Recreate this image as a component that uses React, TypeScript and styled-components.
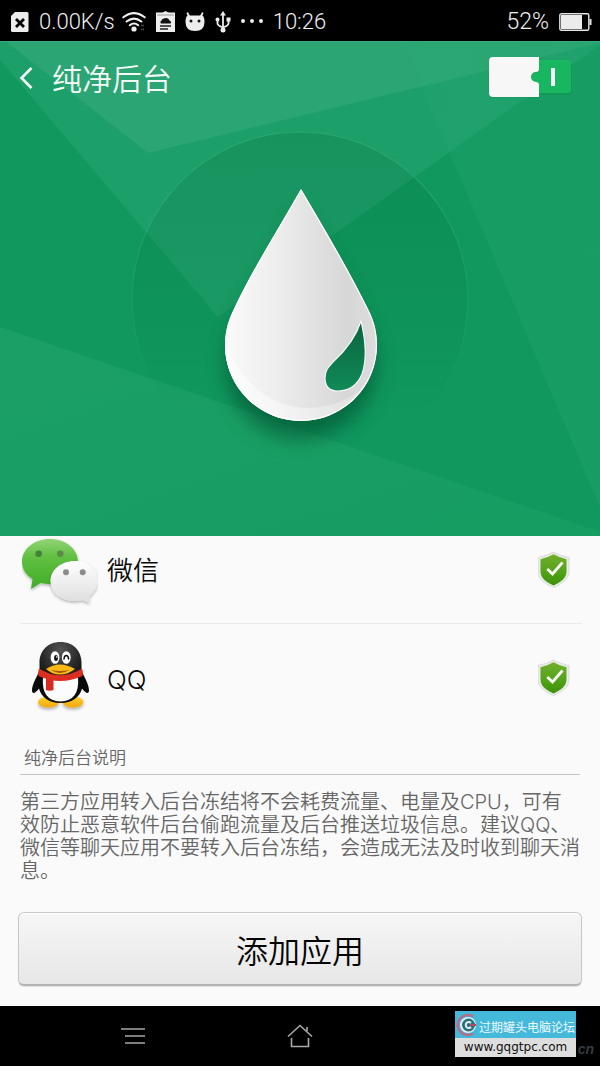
import React, { useState } from 'react';
import styled, { createGlobalStyle } from 'styled-components';

const GlobalStyle = createGlobalStyle`
  *, *::before, *::after { box-sizing: border-box; }
  html { background: #000; }
  body { margin: 0; background: #fafafa; font-family: Inter, "Noto Sans CJK SC", sans-serif; }
  button { font: inherit; color: inherit; background: none; border: 0; padding: 0; cursor: pointer; }
  svg { display: block; flex: none; }
`;

const Screen = styled.div`
  min-height: 100vh;
  display: flex;
  flex-direction: column;
`;

const StatusBar = styled.header`
  display: flex;
  align-items: center;
  justify-content: space-between;
  height: 41px;
  padding: 2px 8px 0 11px;
  background: #000;
  color: #f0f0f0;
  font: 300 22px/26px Roboto, sans-serif;
`;

const StatusGroup = styled.div`
  display: flex;
  align-items: center;
  gap: 10px;
`;

const NetworkGroup = styled(StatusGroup)`
  gap: 7px;
`;

const Percent = styled.span`
  font-size: 23px;
`;

const Hero = styled.section`
  position: relative;
  z-index: 1;
  display: grid;
  grid-template: 495px / minmax(0, 1fr);
  background: #10985f;
  & > * { grid-area: 1 / 1; }
`;

const Facets = styled.svg`
  width: 100%;
  height: 100%;
`;

const Emblem = styled.svg`
  justify-self: center;
  align-self: start;
`;

const TitleBar = styled.div`
  position: relative;
  align-self: start;
  display: flex;
  align-items: center;
  height: 74px;
  padding: 0 28px 0 18px;
  color: #f4fbf7;
`;

const BackButton = styled.button`
  display: flex;
  padding-right: 16px;
`;

const Title = styled.h1`
  margin: 0;
  padding-top: 2px;
  flex: 1;
  font-size: 30px;
  font-weight: 350;
  line-height: 40px;
`;

const Switch = styled.label`
  display: block;
  cursor: pointer;
  & input { position: absolute; opacity: 0; margin: 0; }
`;

const AppList = styled.ul`
  list-style: none;
  margin: -20px 18px 0 20px;
  padding: 0;
`;

const AppRow = styled.li`
  display: flex;
  align-items: center;
  height: 108px;
  padding: 0 12px 0 2px;
  &:not(:last-child) { border-bottom: 1px solid #ebebeb; }
`;

const AppName = styled.span`
  flex: 1;
  padding: 3px 0 0 9px;
  color: #0a0a0a;
  font-size: 26px;
  font-weight: 350;
  line-height: 36px;
`;

const Notes = styled.section`
  padding: 14px 20px 0;
  color: #666;
`;

const NotesHeading = styled.h2`
  margin: 0;
  padding: 0 4px 4px;
  border-bottom: 1px solid #c4c4c4;
  font-size: 17px;
  font-weight: 350;
  line-height: 24px;
`;

const NotesText = styled.p`
  margin: 16px 0 0;
  font-size: 20px;
  font-weight: 350;
  line-height: 23px;
`;

const AddButton = styled.button`
  height: 74px;
  margin: 29px 18px 20px;
  border: 1px solid #c9c9c9;
  border-bottom: 2px solid #b4b4b4;
  border-radius: 6px;
  background: linear-gradient(#f6f6f6, #e7e7e7);
  box-shadow: 0 1px 1px #dedede, inset 0 1px 0 #fff;
  color: #050505;
  font-size: 32px;
  font-weight: 350;
`;

const NavBar = styled.nav`
  position: relative;
  display: grid;
  grid-template-columns: 1fr 1fr 1fr;
  align-items: center;
  height: 60px;
  margin-top: auto;
  padding: 0 50px;
  background: #000;
`;

const NavButton = styled.button`
  display: flex;
  justify-content: center;
`;

const Watermark = styled.a`
  position: absolute;
  right: 24px;
  top: 5px;
  width: 121px;
  background: #dedede;
  color: #111;
  font: 12px/19px "DejaVu Sans", sans-serif;
  text-align: center;
  text-decoration: none;
`;

const WatermarkName = styled.span`
  display: flex;
  align-items: center;
  height: 27px;
  padding: 4px 0 0 1px;
  gap: 1px;
  background: #45b9da;
  color: #eefaff;
  font: 12px/18px "Noto Sans CJK SC", sans-serif;
  white-space: nowrap;
  & svg { margin-top: -4px; }
`;

const WatermarkSuffix = styled.span`
  position: absolute;
  right: 6px;
  top: 33px;
  color: #363b3e;
  font: italic bold 14px/20px "Liberation Sans", sans-serif;
`;

const SimIcon = () => (
  <svg width="18" height="20" viewBox="0 0 18 20" aria-hidden="true">
    <path d="M4 0H16Q17.500 0 17.500 1.500V18.500Q17.500 20 16 20H1.500Q0 20 0 18.500V4Z" fill="#ededed" />
    <path d="M5 7L13 15M13 7L5 15" stroke="#050505" strokeWidth="2.800" />
  </svg>
);

const WifiIcon = () => (
  <svg width="24" height="20" viewBox="0 0 24 20" aria-hidden="true">
    <g fill="none" stroke="#ededed" strokeWidth="2.100" strokeLinecap="round">
      <path d="M1.300 5.300Q12-3.200 22.700 5.300" />
      <path d="M4.600 9.500Q12 3.600 19.400 9.500" />
      <path d="M7.800 13.200Q12 9.800 16.200 13.200" />
    </g>
    <circle cx="12" cy="17" r="2.600" fill="#ededed" />
    <path d="M19 13.500h3M19 17.500h3" stroke="#444" strokeWidth="1.400" />
  </svg>
);

const ClipboardIcon = () => (
  <svg width="19" height="21" viewBox="0 0 19 21" aria-hidden="true">
    <path d="M0 1.500H19V21H0Z" fill="#ededed" />
    <path d="M6 2L9.500 0L13 2V4H6Z" fill="#ededed" />
    <path d="M1 4H18" stroke="#999" />
    <path d="M5 12.500Q3.500 11.300 5.500 9.500Q6 7.500 8.500 7.300Q12.500 6 13.500 9.500Q16 11 14.500 12.500Z" fill="#111" />
    <path d="M4 15H15M4 18H12" stroke="#222" strokeWidth="1.300" />
  </svg>
);

const RobotIcon = () => (
  <svg width="20" height="20" viewBox="0 0 20 20" aria-hidden="true">
    <path d="M2.500 1.300L4.500 5M17.500 1.300L15.500 5" stroke="#ededed" strokeWidth="1.800" strokeLinecap="round" />
    <path d="M2.500 3.500H17.500Q19.500 5 19.500 10Q19.500 19 10 19Q.5 19 .5 10Q.5 5 2.500 3.500Z" fill="#ededed" />
    <circle cx="6" cy="9" r="1.500" fill="#111" />
    <circle cx="14" cy="9" r="1.500" fill="#111" />
  </svg>
);

const UsbIcon = () => (
  <svg width="16" height="22" viewBox="0 0 16 22" aria-hidden="true">
    <path d="M8 3V19M2.500 8.500V12.500Q2.500 14.500 8 16.500Q13.500 14.500 13.500 12.500V8.500" fill="none" stroke="#ededed" strokeWidth="1.800" />
    <path d="M8 0L11 4.500H5Z" fill="#ededed" />
    <circle cx="8" cy="19" r="2.500" fill="#ededed" />
    <circle cx="2.500" cy="8.500" r="2" fill="#ededed" />
    <path d="M11.500 6.500h4v4h-4z" fill="#ededed" />
  </svg>
);

const MoreIcon = () => (
  <svg width="22" height="6" viewBox="0 0 22 6" fill="#ededed" aria-hidden="true">
    <circle cx="2" cy="2" r="2" />
    <circle cx="11" cy="2" r="2" />
    <circle cx="20" cy="2" r="2" />
  </svg>
);

const BatteryIcon = () => (
  <svg width="33" height="18" viewBox="0 0 33 18" aria-hidden="true">
    <rect x=".8" y=".8" width="29" height="16.400" rx="1.500" fill="none" stroke="#e4e4e4" strokeWidth="1.400" />
    <path d="M2 2H23V16H2Z" fill="#ececec" />
    <path d="M30.500 6H32.500V12H30.500Z" fill="#e4e4e4" />
  </svg>
);

const HeroFacets = () => (
  <Facets viewBox="0 41 600 495" preserveAspectRatio="none" aria-hidden="true">
    <defs>
      <linearGradient id="rightFacet" x1="0" y1="0" x2="1" y2="0.300">
        <stop offset="0" stopColor="#2fae78" stopOpacity=".15" />
        <stop offset="1" stopColor="#25a56d" stopOpacity=".36" />
      </linearGradient>
      <linearGradient id="lowFacet" x1="0" y1="0" x2="1" y2="1">
        <stop offset="0" stopColor="#1b9f67" />
        <stop offset="1" stopColor="#169d62" />
      </linearGradient>
    </defs>
    <path d="M0 41H600V45L218 317L0 60Z" fill="#1d9f6a" />
    <path d="M5 41H600V43L148 153Z" fill="#2aa573" />
    <path d="M402 41H600V507Z" fill="url(#rightFacet)" />
    <path d="M0 327L600 532V536H0Z" fill="url(#lowFacet)" />
    <path d="M0 41H600V42H0Z" fill="#3aa97b" />
  </Facets>
);

const DropEmblem = () => (
  <Emblem width="360" height="420" viewBox="120 41 360 420" aria-hidden="true">
    <defs>
      <linearGradient id="disc" x1="0" y1="0" x2="0" y2="1">
        <stop offset="0" stopColor="#00642f" stopOpacity=".2" />
        <stop offset=".5" stopColor="#007038" stopOpacity=".13" />
        <stop offset=".85" stopColor="#007038" stopOpacity="0" />
      </linearGradient>
      <linearGradient id="discRim" x1="0" y1="0" x2="0" y2="1">
        <stop offset="0" stopColor="#3ab27c" stopOpacity=".5" />
        <stop offset=".6" stopColor="#3ab27c" stopOpacity=".2" />
        <stop offset=".75" stopColor="#3ab27c" stopOpacity="0" />
      </linearGradient>
      <linearGradient id="dropFill" x1="0" y1="0" x2="1" y2="0">
        <stop offset="0" stopColor="#fafafa" />
        <stop offset=".35" stopColor="#ededed" />
        <stop offset=".8" stopColor="#d7d7d7" />
        <stop offset="1" stopColor="#dcdcdc" />
      </linearGradient>
      <linearGradient id="dropGlow" x1="0" y1="0" x2="1" y2="0">
        <stop offset="0" stopColor="#fff" stopOpacity=".6" />
        <stop offset="1" stopColor="#fff" stopOpacity=".2" />
      </linearGradient>
      <linearGradient id="leaf" x1="0" y1="0" x2="0" y2="1">
        <stop offset="0" stopColor="#0a6340" />
        <stop offset="1" stopColor="#108b57" />
      </linearGradient>
      <filter id="dropShadow" x="-30%" y="-20%" width="160%" height="150%">
        <feGaussianBlur stdDeviation="10" />
      </filter>
      <clipPath id="dropClip">
        <path d="M301 189C325 230 349 270 369 311A76 76 0 1 1 233 311C252 270 278 230 301 189Z" />
      </clipPath>
    </defs>
    <circle cx="300" cy="300" r="168" fill="url(#disc)" stroke="url(#discRim)" strokeWidth="1.200" />
    <path d="M301 205C325 245 349 284 367 319A75 75 0 1 1 235 319C252 284 278 245 301 205Z" transform="translate(0 9)" fill="#004a29" opacity=".6" filter="url(#dropShadow)" />
    <path d="M301 189C325 230 349 270 369 311A76 76 0 1 1 233 311C252 270 278 230 301 189Z" fill="url(#dropFill)" />
    <g clipPath="url(#dropClip)">
      <path d="M220 330Q248 408 310 408Q360 406 385 360V430H220Z" fill="url(#dropGlow)" />
      <path d="M301 189C325 230 349 270 369 311A76 76 0 1 1 233 311C252 270 278 230 301 189Z" fill="none" stroke="#fff" strokeWidth="2.200" />
    </g>
    <path d="M361 321C366 342 367 360 362 374C357 386 348 391 338 391C329 391 325 386 325 378C325 371 328 367 333 362C345 351 356 337 361 321Z" fill="url(#leaf)" stroke="#f6f6f6" strokeWidth="1.200" />
  </Emblem>
);

const WeChatIcon = () => (
  <svg width="76" height="76" viewBox="0 0 76 76" aria-hidden="true">
    <defs>
      <linearGradient id="wxGreen" x1="0" y1="0" x2="0" y2="1">
        <stop offset="0" stopColor="#92d477" />
        <stop offset=".35" stopColor="#62c043" />
        <stop offset="1" stopColor="#3fad27" />
      </linearGradient>
      <linearGradient id="wxWhite" x1="0" y1="0" x2="0" y2="1">
        <stop offset="0" stopColor="#fff" />
        <stop offset="1" stopColor="#dedede" />
      </linearGradient>
      <filter id="wxShadow" x="-20%" y="-20%" width="140%" height="150%">
        <feDropShadow dx="0" dy="1.500" stdDeviation="1.500" floodColor="#000" floodOpacity=".3" />
      </filter>
    </defs>
    <path filter="url(#wxShadow)" d="M28 7C44 7 56 17 56 30S44 52 28 52Q23 52 18.500 51L9 57L10.500 47C4 43 0 37 0 30C0 17 12 7 28 7Z" fill="url(#wxGreen)" />
    <circle cx="16.700" cy="21.700" r="3.300" fill="#42833a" />
    <circle cx="38.300" cy="21.700" r="3.300" fill="#5a8c48" />
    <path filter="url(#wxShadow)" d="M52.500 29C65.500 29 75.500 37.500 75.500 48.500C75.500 55 72 60.500 67 64.500L67.500 71L60 68Q56 69 52.500 69C39 69 28.500 60 28.500 49S39 29 52.500 29Z" fill="url(#wxWhite)" />
    <circle cx="44" cy="40.300" r="3" fill="#8c8c8c" />
    <circle cx="60.700" cy="40.300" r="3" fill="#8c8c8c" />
  </svg>
);

const QQIcon = () => (
  <svg width="76" height="76" viewBox="0 0 76 76" aria-hidden="true">
    <defs>
      <radialGradient id="qqHead" cx=".5" cy=".15" r=".55">
        <stop offset="0" stopColor="#555" />
        <stop offset="1" stopColor="#0a0a0a" />
      </radialGradient>
      <linearGradient id="qqFoot" x1="0" y1="0" x2="0" y2="1">
        <stop offset="0" stopColor="#ffd32e" />
        <stop offset="1" stopColor="#f3a60c" />
      </linearGradient>
      <filter id="qqShadow" x="-20%" y="-20%" width="140%" height="180%">
        <feDropShadow dx="0" dy="2" stdDeviation="1.500" floodColor="#000" floodOpacity=".3" />
      </filter>
    </defs>
    <g filter="url(#qqShadow)" fill="url(#qqFoot)">
      <ellipse cx="26.500" cy="62" rx="10.500" ry="5.500" />
      <ellipse cx="51" cy="62" rx="10.500" ry="5.500" />
    </g>
    <path d="M38.500 2C51 2 59.500 10.500 59.500 22.500V31C63 38 67 45 67 50.500C67 54 64 54 60 48.500C58 57 50 63 38.500 63S19 57 17 48.500C13 54 10 54 10 50.500C10 45 14 38 17.500 31V22.500C17.500 10.500 26 2 38.500 2Z" fill="url(#qqHead)" />
    <path d="M21 37Q38 43 56 37Q58 61 38.500 61.500Q19 61 21 37Z" fill="#fcfcfc" />
    <path d="M17 28.500Q38 42 60 28.500Q61.500 32 60.500 36Q38 46 16.500 36Q15.500 32 17 28.500Z" fill="#dd2f21" />
    <path d="M24 38L31.500 40V50Q27.500 51.500 24 50Z" fill="#d82a1e" />
    <ellipse cx="33" cy="17.500" rx="4.400" ry="6.300" fill="#fff" />
    <ellipse cx="44.300" cy="17.500" rx="4.400" ry="6.300" fill="#fff" />
    <ellipse cx="34" cy="18" rx="1.900" ry="3" fill="#111" />
    <circle cx="34.700" cy="17" r=".8" fill="#fff" />
    <path d="M42 19Q42.300 15.500 44.300 15.500T46.600 19" fill="none" stroke="#111" strokeWidth="1.500" strokeLinecap="round" />
    <path d="M24 29Q31 24.500 38 24.500T53 29Q46 34.500 38 34.500T24 29Z" fill="#fcb814" />
    <path d="M29 30Q38 32 47 30Q43 33 38 33T29 30Z" fill="#a45a08" />
  </svg>
);

const ShieldIcon = () => (
  <svg width="32" height="38" viewBox="0 0 32 38" aria-hidden="true">
    <defs>
      <linearGradient id="shield" x1="0" y1="0" x2="0" y2="1">
        <stop offset="0" stopColor="#71ae2c" />
        <stop offset=".5" stopColor="#57a41c" />
        <stop offset="1" stopColor="#3b9208" />
      </linearGradient>
    </defs>
    <path d="M15.500 1Q22.500 5 31 6.500V20.500C31 29 23 33 15.500 36.500C8 33 0 29 0 20.500V6.500Q8.500 5 15.500 1Z" fill="#e9ece4" stroke="#d4d5d8" strokeWidth=".8" />
    <path d="M15.500 3.300Q22 7 28.500 8.200V20.500C28.500 27.500 22 31.500 15.500 34.500C9 31.500 2.500 27.500 2.500 20.500V8.200Q9 7 15.500 3.300Z" fill="url(#shield)" />
    <path d="M9.300 18L14.500 23L24.500 11.500" fill="none" stroke="#fbfdf7" strokeWidth="2.800" />
  </svg>
);

const ToggleArt = ({ on }: { on: boolean }) => (
  <svg width="83" height="42" viewBox="0 0 83 42" aria-hidden="true">
    <path d="M48 5H80Q83 5 83 8V35Q83 38 80 38H48Z" fill="#129453" opacity=".6" />
    <path d="M40 3H79Q82 3 82 6V33Q82 36 79 36H40Z" fill="#19b662" />
    <path d="M4 1H50V13.500Q50 16 47 16A5 5 0 0 0 47 26Q50 26 50 28.500V41H4Q0 41 0 37V5Q0 1 4 1Z" fill="#14955a" opacity=".6" />
    <path d="M4 0H50V12Q50 15 47 15A5 5 0 0 0 47 25Q50 25 50 28V40H4Q0 40 0 36V4Q0 0 4 0Z" fill="#f7f7f7" />
    {on && <path d="M62 11H66V29H62Z" fill="#f4fff8" />}
  </svg>
);

const apps = [
  { name: '微信', Icon: WeChatIcon },
  { name: 'QQ', Icon: QQIcon },
];

export default function App() {
  const [enabled, setEnabled] = useState(true);

  return (
    <Screen>
      <GlobalStyle />
      <StatusBar>
        <StatusGroup>
          <SimIcon />
          <NetworkGroup>
            <span>0.00K/s</span>
            <WifiIcon />
          </NetworkGroup>
          <ClipboardIcon />
          <RobotIcon />
          <UsbIcon />
          <MoreIcon />
          <time>10:26</time>
        </StatusGroup>
        <StatusGroup>
          <Percent>52%</Percent>
          <BatteryIcon />
        </StatusGroup>
      </StatusBar>

      <Hero>
        <HeroFacets />
        <DropEmblem />
        <TitleBar>
          <BackButton type="button" aria-label="返回">
            <svg width="18" height="24" viewBox="0 0 18 24" fill="none" stroke="#f4fbf7" strokeWidth="2.600" aria-hidden="true">
              <path d="M13.500 2L3.500 12L13.500 22" />
            </svg>
          </BackButton>
          <Title>纯净后台</Title>
          <Switch>
            <input type="checkbox" role="switch" aria-label="纯净后台" checked={enabled} onChange={(e) => setEnabled(e.target.checked)} />
            <ToggleArt on={enabled} />
          </Switch>
        </TitleBar>
      </Hero>

      <AppList>
        {apps.map(({ name, Icon }) => (
          <AppRow key={name}>
            <Icon />
            <AppName>{name}</AppName>
            <button type="button" aria-label={name}>
              <ShieldIcon />
            </button>
          </AppRow>
        ))}
      </AppList>

      <Notes>
        <NotesHeading>纯净后台说明</NotesHeading>
        <NotesText>
          第三方应用转入后台冻结将不会耗费流量、电量及CPU，可有效防止恶意软件后台偷跑流量及后台推送垃圾信息。建议QQ、微信等聊天应用不要转入后台冻结，会造成无法及时收到聊天消息。
        </NotesText>
      </Notes>

      <AddButton type="button">添加应用</AddButton>

      <NavBar>
        <NavButton type="button" aria-label="菜单">
          <svg width="26" height="18" viewBox="0 0 26 18" stroke="#a8a8a8" strokeWidth="1.600" aria-hidden="true">
            <path d="M1 2H25M5 9H25M5 16H25" />
          </svg>
        </NavButton>
        <NavButton type="button" aria-label="主页">
          <svg width="26" height="24" viewBox="0 0 26 24" fill="none" stroke="#a8a8a8" strokeWidth="1.600" aria-hidden="true">
            <path d="M1 12.500L13 1.500L25 12.500M20 7V3M4.500 14V22.500H21.500V14" />
          </svg>
        </NavButton>
        <WatermarkSuffix>cn</WatermarkSuffix>
        <Watermark href="#">
          <WatermarkName>
            <svg width="22" height="24" viewBox="0 0 22 24" aria-hidden="true">
              <path d="M17 3.500A10 10 0 1 0 17 20.500" fill="none" stroke="#b96a86" strokeWidth="2.500" />
              <circle cx="12" cy="12" r="8" fill="#e3f2f5" />
              <circle cx="12.500" cy="12" r="6.500" fill="#2b6f7b" />
              <path d="M15 10A3 3 0 1 0 15 14" fill="none" stroke="#dceff2" strokeWidth="2" />
              <path d="M14 11H20V13H14Z" fill="#b5495c" />
            </svg>
            过期罐头电脑论坛
          </WatermarkName>
          www.gqgtpc.com
        </Watermark>
      </NavBar>
    </Screen>
  );
}
